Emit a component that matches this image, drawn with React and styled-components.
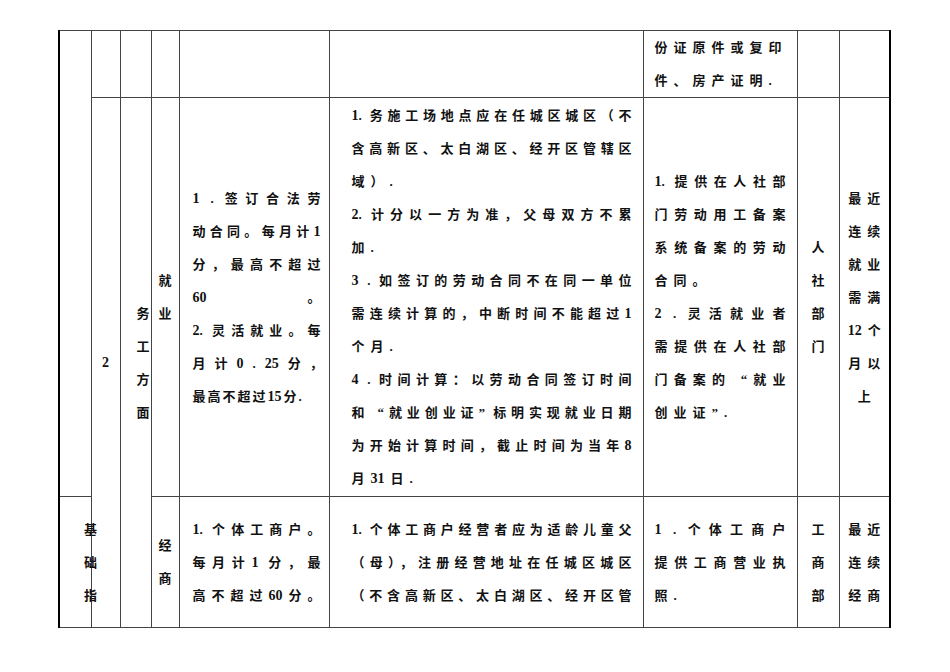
import styled, { createGlobalStyle, css } from 'styled-components';

const GlobalStyle = createGlobalStyle`
	html, body {
		margin: 0;
		padding: 0;
		background: #fff;
	}
	body {
		font-family: 'Liberation Serif', 'Noto Sans CJK SC', serif;
		font-weight: bold;
		font-size: 13px;
		color: #111;
	}
`;

const Page = styled.div`
	width: 950px;
	height: 672px;
	padding: 30px 0 0 58px;
	box-sizing: border-box;
	overflow: hidden;
`;

const Table = styled.table`
	border-collapse: collapse;
	table-layout: fixed;
	width: 833px;
	border-left: 2px solid #000;
	border-right: 2px solid #000;
`;

const Row = styled.tr`
	height: ${p => p.$h}px;
`;

const Cell = styled.td`
	border: 1px solid #444;
	padding: 0 ${p => p.$pr ?? 0}px 0 ${p => p.$pl ?? 0}px;
	vertical-align: middle;
	text-align: ${p => (p.$center ? 'center' : 'left')};
	overflow: visible;
`;

const Line = styled.div`
	height: 33px;
	line-height: 33px;
	white-space: nowrap;
	letter-spacing: ${p => p.$ls ?? 6}px;
	${p =>
		p.$full &&
		css`
			white-space: normal;
			letter-spacing: 0;
			text-align: justify;
			text-align-last: justify;
		`}
`;

// digits stay tight, only the gap after the number follows the line spacing
const Num = styled.span`
	letter-spacing: 0;
	margin-right: ${p => p.$ls}px;
	font-size: 14px;
`;

const withNums = (text, ls) =>
	text.split(/(\d+)/).map((part, i) =>
		/^\d+$/.test(part) ? (
			<Num key={i} $ls={ls}>
				{part}
			</Num>
		) : (
			part
		)
	);

const widths = [32, 29, 31, 28, 150, 314, 154, 42, 51];

const Lines = ({ items }) =>
	items.map((it, i) =>
		typeof it === 'string' ? (
			<Line key={i} $full>
				{withNums(it, 0)}
			</Line>
		) : (
			<Line key={i} $ls={it.ls ?? 6}>
				{withNums(it.t, it.ls ?? 6)}
			</Line>
		)
	);

const Stack = ({ chars, ls = 0 }) =>
	chars.map((c, i) => (
		<Line key={i} $ls={ls}>
			{withNums(c, ls)}
		</Line>
	));

const App = () => (
	<>
		<GlobalStyle />
		<Page>
			<Table>
				<colgroup>
					{widths.map((w, i) => (
						<col key={i} style={{ width: w }} />
					))}
				</colgroup>
				<tbody>
					<Row $h={67}>
						<Cell rowSpan={2} />
						<Cell />
						<Cell />
						<Cell />
						<Cell />
						<Cell />
						<Cell $pl={11}>
							<Lines items={[{ t: '份证原件或复印' }, { t: '件、房产证明.' }]} />
						</Cell>
						<Cell />
						<Cell />
					</Row>
					<Row $h={399}>
						<Cell rowSpan={2} $center>
							<Line $ls={0}>{withNums('2', 0)}</Line>
						</Cell>
						<Cell rowSpan={2} $center $pl={15}>
							<Stack chars={['务', '工', '方', '面']} />
						</Cell>
						<Cell $center>
							<Stack chars={['就', '业']} />
						</Cell>
						<Cell $pl={13} $pr={8}>
							<Lines
								items={[
									'1 . 签订合法劳',
									'动合同。每月计1',
									'分，最高不超过',
									'60 。',
									'2. 灵活就业。每',
									{ t: '月计0.25分，', ls: 9 },
									{ t: '最高不超过15分.', ls: 2 },
								]}
							/>
						</Cell>
						<Cell $pl={22} $pr={11}>
							<Lines
								items={[
									'1. 务施工场地点应在任城区城区（不',
									'含高新区、太白湖区、经开区管辖区',
									{ t: '域）.' },
									'2. 计分以一方为准，父母双方不累',
									{ t: '加.' },
									'3 . 如签订的劳动合同不在同一单位',
									'需连续计算的，中断时间不能超过1',
									{ t: '个月.' },
									'4 . 时间计算：以劳动合同签订时间',
									'和 “就业创业证” 标明实现就业日期',
									'为开始计算时间，截止时间为当年8',
									{ t: '月31日.' },
								]}
							/>
						</Cell>
						<Cell $pl={11} $pr={11}>
							<Lines
								items={[
									'1. 提供在人社部',
									'门劳动用工备案',
									'系统备案的劳动',
									{ t: '合同。' },
									'2 . 灵活就业者',
									'需提供在人社部',
									'门备案的 “就业',
									{ t: '创业证”.' },
								]}
							/>
						</Cell>
						<Cell $center>
							<Stack chars={['人', '社', '部', '门']} />
						</Cell>
						<Cell $center $pl={6}>
							<Stack ls={6} chars={['最近', '连续', '就业', '需满', '12个', '月以', '上']} />
						</Cell>
					</Row>
					<Row $h={131}>
						<Cell $pl={24}>
							<Stack chars={['基', '础', '指']} />
						</Cell>
						<Cell $center>
							<Stack chars={['经', '商']} />
						</Cell>
						<Cell $pl={13} $pr={8}>
							<Lines items={['1. 个体工商户。', '每月计1 分，最', { t: '高不超过60分。', ls: 6 }]} />
						</Cell>
						<Cell $pl={22} $pr={11}>
							<Lines
								items={[
									'1. 个体工商户经营者应为适龄儿童父',
									'（母），注册经营地址在任城区城区',
									'（不含高新区、太白湖区、经开区管',
								]}
							/>
						</Cell>
						<Cell $pl={11} $pr={11}>
							<Lines items={['1 . 个体工商户', '提供工商营业执', { t: '照.' }]} />
						</Cell>
						<Cell $center>
							<Stack chars={['工', '商', '部']} />
						</Cell>
						<Cell $center $pl={6}>
							<Stack ls={6} chars={['最近', '连续', '经商']} />
						</Cell>
					</Row>
				</tbody>
			</Table>
		</Page>
	</>
);

export default App;
